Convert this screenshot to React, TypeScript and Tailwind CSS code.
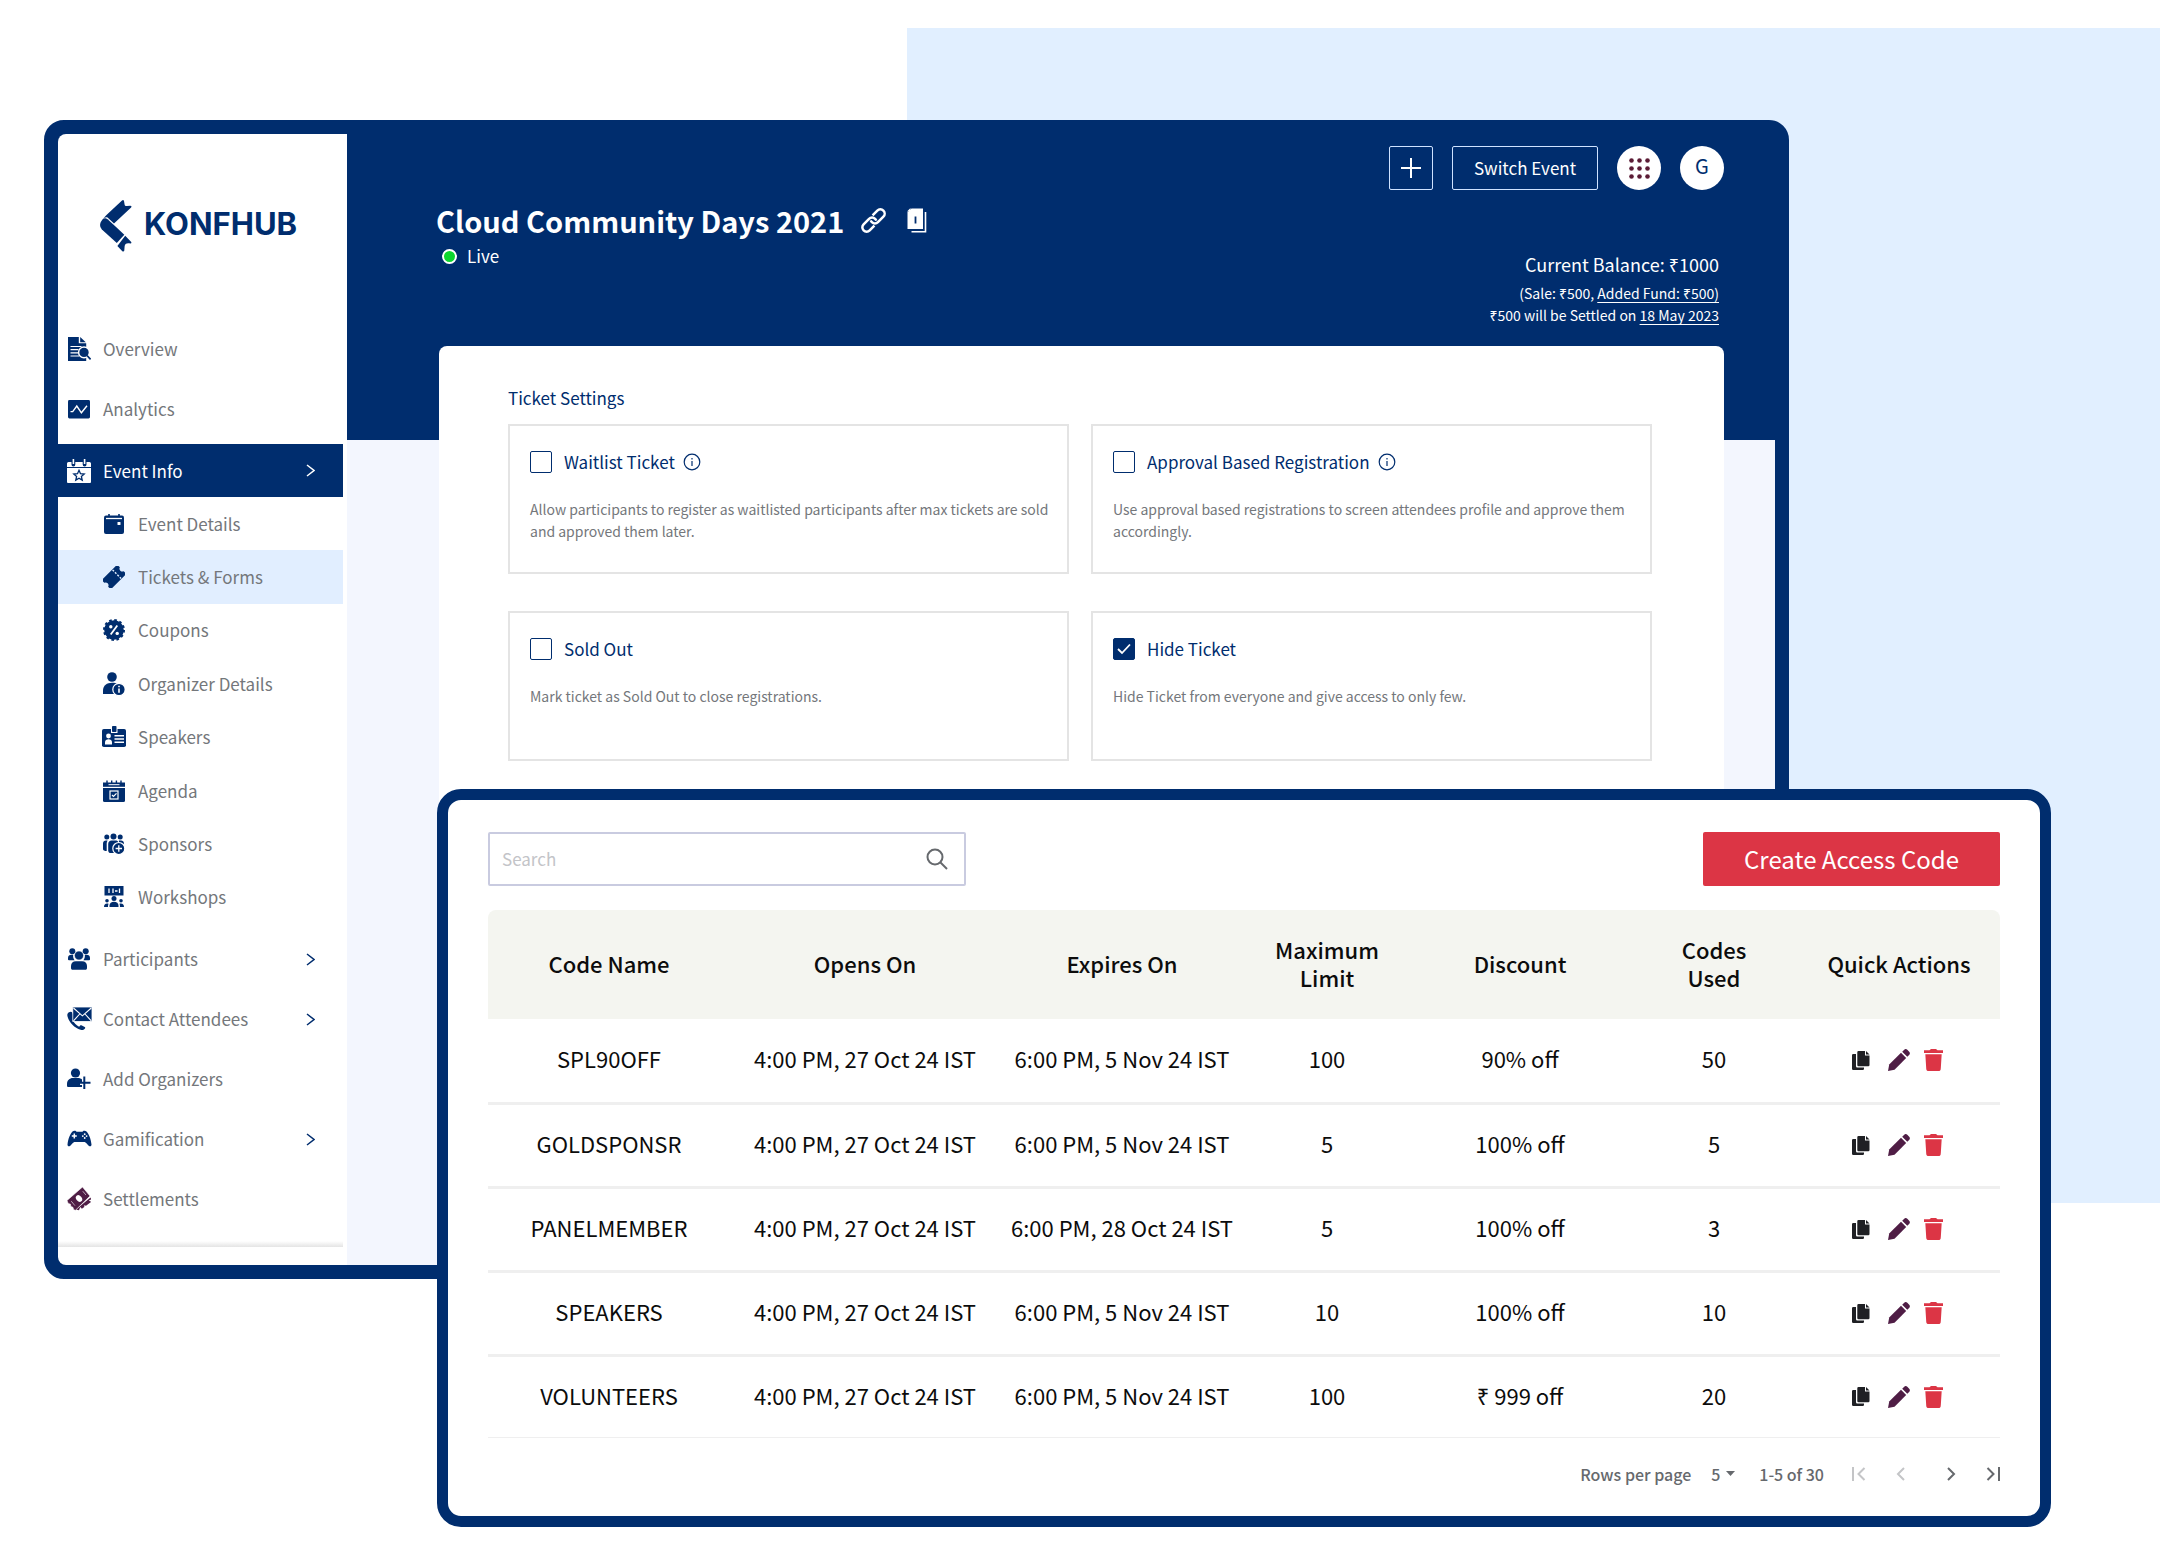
import { useId, useState, type ReactNode } from "react";

const NAVY = "#002d6e";
const PLUM = "#4f1d45";

function Svg({ w = 24, h = 24, children }: { w?: number; h?: number; children: ReactNode }) {
  return (
    <svg width={w} height={h} viewBox={`0 0 ${w} ${h}`} fill="none" aria-hidden="true" className="shrink-0">
      {children}
    </svg>
  );
}

const OverviewIcon = () => (
  <Svg>
    <path d="M1 0h10.800v6.200h7.400V24H1z" fill={NAVY} />
    <path d="M13.200 0l5.600 5.200h-5.600z" fill={NAVY} />
    <path d="M3.500 9.500h11M3.500 12.700h8M3.500 15.900h8M3.500 19h8.500" stroke="#fff" strokeWidth="1.200" />
    <circle cx="17" cy="15.400" r="5.400" fill={NAVY} stroke="#fff" strokeWidth="1.400" />
    <path d="M20 18.500l3.600 3.800" stroke={NAVY} strokeWidth="1.800" />
  </Svg>
);

const AnalyticsIcon = () => (
  <Svg w={22} h={20}>
    <rect y="1" width="22" height="18.400" rx="1.400" fill={NAVY} />
    <path d="M2.500 12.600h2.200L8.800 7l4.600 6.800 5.600-7" stroke="#fff" strokeWidth="1.400" />
  </Svg>
);

const EventInfoIcon = () => (
  <Svg>
    <path d="M1.500 3h3v2.500a1.900 1.900 0 0 0 3.800 0V3h7.400v2.500a1.900 1.900 0 0 0 3.800 0V3h3A1.500 1.500 0 0 1 24 4.500V8H0V4.500A1.500 1.500 0 0 1 1.500 3z" fill="#fff" />
    <path d="M6.400 0v5M17.600 0v5" stroke="#fff" strokeWidth="1.600" />
    <path d="M0 9h24v14a1 1 0 0 1-1 1H1a1 1 0 0 1-1-1z" fill="#fff" />
    <path d="M12 11.300l1.500 3.400 3.700.4-2.800 2.400.8 3.600-3.200-1.900-3.200 1.900.8-3.600-2.800-2.400 3.700-.4z" stroke={NAVY} strokeWidth="1.300" />
  </Svg>
);

const EventDetailsIcon = () => (
  <Svg w={20} h={20}>
    <rect y="1.500" width="20" height="18.500" rx="2" fill={NAVY} />
    <path d="M5 0v3M15 0v3" stroke={NAVY} strokeWidth="1.600" />
    <path d="M2 4.500h16" stroke="#fff" strokeWidth="1.300" />
    <rect x="13.500" y="8" width="3" height="3" rx=".6" fill="#fff" />
  </Svg>
);

const TicketIcon = () => (
  <Svg w={22} h={22}>
    <g transform="rotate(-45 11 11)">
      <path d="M0 4.500h22v3.800a2.800 2.800 0 0 0 0 5.400v3.800H0v-3.800a2.800 2.800 0 0 0 0-5.400z" fill={NAVY} />
      <path d="M15 5v12" stroke="#e1eeff" strokeWidth="1.400" strokeDasharray="2 1.400" />
    </g>
  </Svg>
);

const CouponIcon = () => (
  <Svg w={22} h={22}>
    <circle cx="11" cy="11" r="9.800" fill={NAVY} />
    <circle cx="11" cy="11" r="10" stroke={NAVY} strokeWidth="2" strokeDasharray="2.620 2.616" />
    <path d="M14.300 6.500l-6.600 9" stroke="#fff" strokeWidth="1.800" />
    <circle cx="7.800" cy="7.800" r="1.700" fill="#fff" />
    <circle cx="14.200" cy="14.400" r="1.700" fill="#fff" />
  </Svg>
);

const OrganizerIcon = () => (
  <Svg w={22} h={24}>
    <circle cx="9" cy="5" r="4.800" fill={NAVY} />
    <path d="M0 22v-3.500C0 13.500 4 10.800 9 10.800s7.500 2 8.500 5V22z" fill={NAVY} />
    <circle cx="16" cy="17.500" r="6.200" fill={NAVY} stroke="#fff" strokeWidth="1.200" />
    <path d="M16 16.500v4.200M16 13.700v1.600" stroke="#fff" strokeWidth="1.600" />
  </Svg>
);

const SpeakersIcon = () => (
  <Svg w={24} h={22}>
    <rect y="3" width="24" height="18" rx="1.800" fill={NAVY} />
    <path d="M9 2.500h6.500V7H9z" fill="#fff" />
    <rect x="10" y="0" width="4.500" height="6" rx=".8" fill={NAVY} />
    <circle cx="6.500" cy="10" r="2.400" fill="#fff" />
    <path d="M3 18.500v-2c0-2 1.500-3.200 3.500-3.200s3.500 1.200 3.500 3.200v2z" fill="#fff" />
    <path d="M12.500 9.700H22M12.500 13H22M12.500 16.300H22" stroke="#fff" strokeWidth="1.500" />
  </Svg>
);

const AgendaIcon = () => (
  <Svg w={22} h={22}>
    <path d="M0 2.500h22v4.300H0z" fill={NAVY} />
    <path d="M4 .5v3M8.700.5v3M13.400.5v3M18 .5v3" stroke={NAVY} strokeWidth="1.400" />
    <path d="M5.500 4.700h11" stroke="#fff" strokeWidth="1" />
    <path d="M0 8h22v12.500a1.500 1.500 0 0 1-1.500 1.500h-19A1.500 1.500 0 0 1 0 20.500z" fill={NAVY} />
    <rect x="7" y="11" width="8" height="8" stroke="#fff" strokeWidth="1.200" />
    <path d="M9 15l1.500 1.500 3-3.200" stroke="#fff" strokeWidth="1.200" />
  </Svg>
);

const SponsorsIcon = () => (
  <Svg w={22} h={22}>
    <circle cx="3.800" cy="4" r="2.500" fill={NAVY} />
    <circle cx="10.500" cy="3.500" r="3" fill={NAVY} />
    <circle cx="17.200" cy="4" r="2.500" fill={NAVY} />
    <path d="M0 16V10.500C0 8.800 1.200 7.600 3 7.600h1.600c-.6 1-.9 1.900-.9 3V18C1.500 18 0 17.500 0 16z" fill={NAVY} />
    <path d="M5.200 11c0-2 1.400-3.400 3.400-3.400h3.800c1.600 0 2.600.7 3.100 1.700V20H8c-1.700 0-2.800-1-2.800-2.600z" fill={NAVY} />
    <path d="M16 7.600h2c1.700 0 3 1.200 3 3V13h-5z" fill={NAVY} />
    <circle cx="15.800" cy="15.500" r="6" fill={NAVY} stroke="#fff" strokeWidth="1.200" />
    <path d="M15.800 12.300v6.400M12.600 15.500H19" stroke="#fff" strokeWidth="1.300" />
  </Svg>
);

const WorkshopsIcon = () => (
  <Svg w={20} h={22}>
    <rect x=".5" y="0" width="19" height="9.500" fill={NAVY} />
    <path d="M5 2.500v4.500M9 2.500v4.500M15.500 2.500v4.500M11 5h2.500" stroke="#fff" strokeWidth="1.300" />
    <circle cx="10" cy="12.500" r="2.500" fill={NAVY} />
    <path d="M5.500 21v-1.500c0-2.400 1.800-3.800 4.500-3.800s4.500 1.400 4.500 3.800V21z" fill={NAVY} />
    <circle cx="3" cy="14.800" r="1.800" fill={NAVY} />
    <circle cx="17" cy="14.800" r="1.800" fill={NAVY} />
    <path d="M0 21c0-2.400 1-3.600 3.200-3.600.6 0 1 .1 1.300.3-.4.900-.5 2-.5 3.300zM20 21c0-2.400-1-3.600-3.200-3.600-.6 0-1 .1-1.300.3.400.9.500 2 .5 3.300z" fill={NAVY} />
  </Svg>
);

const ParticipantsIcon = () => (
  <Svg w={22} h={22}>
    <circle cx="4.300" cy="3.200" r="3" fill={NAVY} />
    <circle cx="17.700" cy="3.200" r="3" fill={NAVY} />
    <path d="M0 11.500V10c0-2 1.400-3.200 3.400-3.200h1.800c-.3 2 .2 4 1.400 5.500H1c-.6 0-1-.3-1-.8zM22 11.500V10c0-2-1.400-3.200-3.400-3.200h-1.800c.3 2-.2 4-1.400 5.500H21c.6 0 1-.3 1-.8z" fill={NAVY} />
    <circle cx="11" cy="7.500" r="4.600" fill={NAVY} stroke="#fff" strokeWidth=".7" />
    <path d="M3 20v-2c0-3 2-4.800 4.800-4.800h6.400c2.800 0 4.800 1.800 4.800 4.800v2c0 1.200-.6 1.800-1.800 1.800H4.800C3.600 21.800 3 21.200 3 20z" fill={NAVY} />
  </Svg>
);

const ContactIcon = () => (
  <Svg w={25} h={24}>
    <path d="M2 5.200C.3 6 0 7.800.6 9.800 2.300 15.700 7.500 21 13.600 22.800c2 .6 3.700 0 4.500-1.600.2-.5.100-1-.4-1.300l-3.300-1.600c-.6-.2-1-.1-1.400.4l-.9 1c-2.700-1.400-5-3.700-6.400-6.500l1-1c.4-.4.500-.9.300-1.400L5.300 5.500C4.500 4.300 3.200 4.600 2 5.200z" fill={NAVY} />
    <rect x="5.800" y="0" width="19.200" height="14.500" fill={NAVY} stroke="#fff" strokeWidth=".8" />
    <path d="M6.500 1l8.900 7.800L24.300 1M6.500 13.800l6.200-6.800M24.300 13.800L18 7" stroke="#fff" strokeWidth="1.100" />
  </Svg>
);

const AddOrganizerIcon = () => (
  <Svg w={24} h={22}>
    <circle cx="8.500" cy="5" r="4.600" fill={NAVY} />
    <path d="M0 17.500V16c0-3.500 2.500-6 6-6h5c1.500 0 3 .5 4 1.500V14h-2v3h2v2H1.500C.5 19 0 18.500 0 17.500z" fill={NAVY} />
    <path d="M17.300 8.500V21M11.500 14.800h12" stroke={NAVY} strokeWidth="2" />
  </Svg>
);

const GamepadIcon = () => (
  <Svg w={25} h={18}>
    <path d="M5.500 1.500c.8-.7 1.700-1 3-.7l1 .9h6l1-.9c1.300-.3 2.200 0 3 .7C21.800 3.700 24 9 24.500 14.500c.100 1.700-1.200 2.300-2.500 1.500-1.400-1.200-2.700-3.500-4.300-4H7.300c-1.600.5-2.900 2.800-4.300 4-1.300.8-2.600.2-2.500-1.500C1 9 3.200 3.700 5.500 1.500z" fill={NAVY} />
    <path d="M7.300 3.600v5M4.800 6.100h5" stroke="#fff" strokeWidth="1.500" />
    <circle cx="17.700" cy="4.200" r=".9" fill="#fff" />
    <circle cx="17.700" cy="8" r=".9" fill="#fff" />
    <circle cx="15.800" cy="6.100" r=".9" fill="#fff" />
    <circle cx="19.600" cy="6.100" r=".9" fill="#fff" />
  </Svg>
);

const SettlementsIcon = () => (
  <Svg w={24} h={24}>
    <path d="M9 22.500L23.500 10.500l.7 1.800-2.400 1.200 2.400 1.300-5.200 4-1.800-.5.100 1.800-2.400 1.600-1.700-1.600-1.200 3.200z" fill={PLUM} />
    <path d="M0 13.500L15.500 0l7.500 9L8.500 23.200l-1.800-.4-.8-2.600-2-.6-.4-2.400-2.300-.8z" fill={PLUM} stroke="#fff" strokeWidth=".6" />
    <ellipse cx="12" cy="11.500" rx="2.700" ry="3.700" transform="rotate(-40 12 11.500)" fill="#fff" />
    <path d="M4.500 14.500l3.500 4.200M16 4.500l3 3.600" stroke="#fff" strokeWidth="1" strokeDasharray="1.500 1" />
  </Svg>
);

const Chevron = ({ className }: { className: string }) => (
  <svg width="9" height="13" viewBox="0 0 9 13" fill="none" aria-hidden="true" className={className}>
    <path d="M1 1l7 5.500L1 12" stroke="currentColor" strokeWidth="1.500" />
  </svg>
);

type Item = { label: string; icon: ReactNode; arrow?: boolean };

const topItems: Item[] = [
  { label: "Overview", icon: <OverviewIcon /> },
  { label: "Analytics", icon: <AnalyticsIcon /> },
];

const subItems: Item[] = [
  { label: "Event Details", icon: <EventDetailsIcon /> },
  { label: "Tickets & Forms", icon: <TicketIcon /> },
  { label: "Coupons", icon: <CouponIcon /> },
  { label: "Organizer Details", icon: <OrganizerIcon /> },
  { label: "Speakers", icon: <SpeakersIcon /> },
  { label: "Agenda", icon: <AgendaIcon /> },
  { label: "Sponsors", icon: <SponsorsIcon /> },
  { label: "Workshops", icon: <WorkshopsIcon /> },
];

const bottomItems: Item[] = [
  { label: "Participants", icon: <ParticipantsIcon />, arrow: true },
  { label: "Contact Attendees", icon: <ContactIcon />, arrow: true },
  { label: "Add Organizers", icon: <AddOrganizerIcon /> },
  { label: "Gamification", icon: <GamepadIcon />, arrow: true },
  { label: "Settlements", icon: <SettlementsIcon /> },
];

function NavLink({ item }: { item: Item }) {
  return (
    <a href="#" className="flex h-15 items-center pr-8 pl-[9px]">
      <span className="flex w-6 justify-center">{item.icon}</span>
      <span className="ml-3 flex-1">{item.label}</span>
      {item.arrow && <Chevron className="text-[#002d6e]" />}
    </a>
  );
}

function Logo() {
  return (
    <div className="flex items-center gap-3 pl-[42px] text-[#002d6e]">
      <svg width="32" height="54" viewBox="0 0 32 54" aria-label="KonfHub" className="shrink-0">
        <path d="M22 1.500c.8-.9 1.700-.7 2 .4l.6 3.500c.2 1.200 1 1.800 2.200 1.700l3.500-.4c1.200 0 1.600.8.800 1.700L14 24.500 7.800 18.700c-1.800-.8-3.500-.2-4.800 1.800C4 18.500 5.200 17.200 7 15.500z" fill="currentColor" />
        <path d="M7.600 20.200l7.900 7.300 8.800 8.200-7.500 8.300L3 31.500C-.8 28-.8 24.500 2.500 20.500c1.500-1.700 3.300-1.800 5.100-.3z" fill="currentColor" />
        <path d="M25.200 36.700l5.800 6c.8 1 .5 1.800-.8 1.700-3.400-.8-5.500.3-5.600 3.200l-.3 3.800c-.2 1.200-1.300 1.400-2.200.5l-4.700-5z" fill="currentColor" />
      </svg>
      <span className="pb-1 font-[Inter] text-[31px] leading-8 font-bold">KONFHUB</span>
    </div>
  );
}

function Sidebar() {
  return (
    <aside className="flex w-[289px] shrink-0 flex-col rounded-l-lg bg-white text-[17px] leading-6 text-[#74777b]">
      <div className="pt-[65px] pb-[66px]">
        <Logo />
      </div>
      <nav aria-label="Event">
        {topItems.map((i) => (
          <NavLink key={i.label} item={i} />
        ))}
        <a href="#" className="mt-[5px] mr-1 flex h-[53px] items-center bg-[#002d6e] pr-7 pl-[9px] text-white">
          <span className="flex w-6 justify-center">
            <EventInfoIcon />
          </span>
          <span className="ml-3 flex-1">Event Info</span>
          <Chevron className="text-white" />
        </a>
        <div className="mr-1 grid h-[427px] auto-rows-fr">
          {subItems.map((i, n) => (
            <a key={i.label} href="#" className={n === 1 ? "flex items-center bg-[#e1eeff] pl-11" : "flex items-center pl-11"}>
              <span className="flex w-6 justify-center">{i.icon}</span>
              <span className="ml-3">{i.label}</span>
            </a>
          ))}
        </div>
        <div className="pt-[5px] pb-3">
          {bottomItems.map((i) => (
            <NavLink key={i.label} item={i} />
          ))}
        </div>
      </nav>
      <div className="mt-auto mr-1 mb-[18px] h-1.5 bg-linear-to-b from-white to-[#e4e4e4]" />
    </aside>
  );
}

function Header() {
  return (
    <header className="flex h-[306px] shrink-0 justify-between bg-[#002d6e] pr-[51px] pl-[89px] text-white">
      <div className="pt-[66px]">
        <div className="flex items-center">
          <h1 className="text-[29px] leading-10 font-bold">Cloud Community Days 2021</h1>
          <button type="button" aria-label="Copy link" className="ml-4">
            <svg width="27" height="27" viewBox="0 0 27 27" fill="none" stroke="currentColor" strokeWidth="2.500">
              <g transform="rotate(-45 13.500 13.500)">
                <path d="M10.500 17.800H3.800a4.300 4.300 0 0 1-4.300-4.300 4.300 4.300 0 0 1 4.300-4.300h7.700a4.300 4.300 0 0 1 4.300 4.300c0 .8-.2 1.500-.5 2.100" />
                <path d="M16.500 9.200h6.700a4.300 4.300 0 0 1 4.300 4.300 4.300 4.300 0 0 1-4.300 4.300h-7.700a4.300 4.300 0 0 1-4.300-4.300c0-.8.2-1.500.5-2.100" />
              </g>
            </svg>
          </button>
          <button type="button" aria-label="Duplicate event" className="ml-5">
            <svg width="20" height="25" viewBox="0 0 20 25" fill="none">
              <path d="M4.500.5H16V21H.5V4.500z" fill="#fff" />
              <path d="M0 3.500L3.500 0v3.500z" fill="#fff" />
              <path d="M4.500 23.800h14V4" stroke="#fff" strokeWidth="1.600" />
              <path d="M8.500 8.500v7" stroke={NAVY} strokeWidth="1.800" />
            </svg>
          </button>
        </div>
        <div className="mt-1 ml-1.5 flex items-center gap-2.5">
          <span className="size-[15px] rounded-full border-2 border-white bg-[#0cd62e]" />
          <span className="text-[17px] leading-6">Live</span>
        </div>
      </div>
      <div className="flex flex-col items-end pt-3">
        <div className="flex items-center gap-[19px]">
          <button type="button" aria-label="Add" className="flex size-11 items-center justify-center rounded-xs border border-[#cfe2ff]">
            <svg width="20" height="20" viewBox="0 0 20 20" stroke="#fff" strokeWidth="2" aria-hidden="true">
              <path d="M10 0v20M0 10h20" />
            </svg>
          </button>
          <button type="button" className="h-11 w-[146px] rounded-xs border border-[#cfe2ff] text-[17px] leading-6">
            Switch Event
          </button>
          <button type="button" aria-label="Apps" className="flex size-11 items-center justify-center rounded-full bg-white">
            <svg width="21" height="21" viewBox="0 0 21 21" fill="#5b1b35" aria-hidden="true">
              {[2.5, 10.5, 18.5].map((y) => [2.5, 10.5, 18.5].map((x) => <circle key={`${x}-${y}`} cx={x} cy={y} r="2.300" />))}
            </svg>
          </button>
          <button type="button" aria-label="Account" className="size-11 rounded-full bg-white pb-1 text-[20px] leading-6 text-[#002d6e]">
            G
          </button>
        </div>
        <div className="mt-[62px] pr-[5px] text-right">
          <p className="text-[18px] leading-6">Current Balance: ₹1000</p>
          <p className="mt-1.5 text-[14px] leading-[22px]">
            (Sale: ₹500,{" "}
            <a href="#" className="underline underline-offset-3">
              Added Fund: ₹500)
            </a>
          </p>
          <p className="text-[14px] leading-[22px]">
            ₹500 will be Settled on{" "}
            <a href="#" className="underline underline-offset-3">
              18 May 2023
            </a>
          </p>
        </div>
      </div>
    </header>
  );
}

function SettingCard({ title, text, info, initial = false }: { title: string; text: string; info?: boolean; initial?: boolean }) {
  const id = useId();
  const [on, setOn] = useState(initial);
  return (
    <div className="min-h-[150px] border-2 border-[#e4e4e4] pt-6 pr-3 pl-5">
      <div className="flex items-center">
        <span className="relative flex size-[22px]">
          <input
            id={id}
            type="checkbox"
            checked={on}
            onChange={(e) => setOn(e.target.checked)}
            className="size-[22px] appearance-none rounded-xs border border-[#002d6e] bg-white checked:bg-[#002d6e]"
          />
          {on && (
            <svg viewBox="0 0 22 22" fill="none" stroke="#fff" strokeWidth="1.800" aria-hidden="true" className="pointer-events-none absolute inset-0">
              <path d="M5 11l4 4 8-8.500" />
            </svg>
          )}
        </span>
        <label htmlFor={id} className="ml-3 text-[17px] leading-6 text-[#002d6e]">
          {title}
        </label>
        {info && (
          <svg width="18" height="18" viewBox="0 0 18 18" fill="none" stroke={NAVY} strokeWidth="1.200" role="img" aria-label="More information" className="ml-2">
            <circle cx="9" cy="9" r="7.800" />
            <path d="M9 8v5M9 5v1.500" />
          </svg>
        )}
      </div>
      <p className="mt-6 text-[14px] leading-[22px] text-[#74777b]">{text}</p>
    </div>
  );
}

const codes = [
  ["SPL90OFF", "6:00 PM, 5 Nov 24 IST", "100", "90% off", "50"],
  ["GOLDSPONSR", "6:00 PM, 5 Nov 24 IST", "5", "100% off", "5"],
  ["PANELMEMBER", "6:00 PM, 28 Oct 24 IST", "5", "100% off", "3"],
  ["SPEAKERS", "6:00 PM, 5 Nov 24 IST", "10", "100% off", "10"],
  ["VOLUNTEERS", "6:00 PM, 5 Nov 24 IST", "100", "₹ 999 off", "20"],
];

function RowActions({ name }: { name: string }) {
  return (
    <div className="flex items-center justify-center gap-3.5 pr-1">
      <button type="button" aria-label={`Copy ${name}`}>
        <svg width="18" height="19" viewBox="0 0 18 19" fill="#1f2024" aria-hidden="true">
          <path d="M6.500 0H13v4.500h4.500V14a1.200 1.200 0 0 1-1.200 1.200H6.500A1.200 1.200 0 0 1 5.300 14V1.200A1.200 1.200 0 0 1 6.500 0z" />
          <path d="M14 0l3.500 3.500H14z" />
          <path d="M0 4.200A1.200 1.200 0 0 1 1.200 3H4v12.200a1.300 1.300 0 0 0 1.300 1.300H12v1.300a1.200 1.200 0 0 1-1.200 1.200H1.200A1.200 1.200 0 0 1 0 17.800z" />
        </svg>
      </button>
      <button type="button" aria-label={`Edit ${name}`} className="ml-1">
        <svg width="22" height="22" viewBox="0 0 22 22" fill={PLUM} aria-hidden="true">
          <path d="M0 22l1.200-6.500L13 3.800l5.200 5.200L6.500 20.700z" />
          <path d="M14.200 2.700L16 .9c1-1 2.300-1.100 3.300-.1l1.900 1.900c1 1 .9 2.300-.1 3.300l-1.800 1.800z" />
        </svg>
      </button>
      <button type="button" aria-label={`Delete ${name}`}>
        <svg width="19" height="22" viewBox="0 0 19 22" fill="#dc3545" aria-hidden="true">
          <path d="M0 1.300h5.500L7 0h5l1.500 1.300H19V4H0z" />
          <path d="M1.300 5.300h16.400l-1 14.900c-.1 1.100-.9 1.800-2 1.800H4.300c-1.100 0-1.900-.7-2-1.800z" />
        </svg>
      </button>
    </div>
  );
}

function CodesTable() {
  return (
    <table className="mt-6 w-full table-fixed text-center text-[22px] leading-7 text-[#0c0c0c]">
      <colgroup>
        <col className="w-[242px]" />
        <col className="w-[270px]" />
        <col className="w-[244px]" />
        <col className="w-[166px]" />
        <col className="w-[220px]" />
        <col className="w-[168px]" />
        <col className="w-[202px]" />
      </colgroup>
      <thead>
        <tr className="h-[109px] bg-[#f4f5f0]">
          <th className="rounded-tl-lg pb-1 font-medium">Code Name</th>
          <th className="pb-1 font-medium">Opens On</th>
          <th className="pb-1 font-medium">Expires On</th>
          <th className="pb-1 font-medium">
            Maximum
            <br />
            Limit
          </th>
          <th className="pb-1 font-medium">Discount</th>
          <th className="pb-1 font-medium">
            Codes
            <br />
            Used
          </th>
          <th className="rounded-tr-lg pb-1 font-medium whitespace-nowrap">Quick Actions</th>
        </tr>
      </thead>
      <tbody>
        {codes.map(([name, expires, limit, discount, used]) => (
          <tr key={name} className="h-[84px] border-b-3 border-[#efefef] last:h-[82px] last:border-b">
            <td className="pb-1">{name}</td>
            <td className="pb-1 whitespace-nowrap">4:00 PM, 27 Oct 24 IST</td>
            <td className="pb-1 whitespace-nowrap">{expires}</td>
            <td className="pb-1">{limit}</td>
            <td className="pb-1">{discount}</td>
            <td className="pb-1">{used}</td>
            <td>
              <RowActions name={name} />
            </td>
          </tr>
        ))}
      </tbody>
    </table>
  );
}

function PageButton({ label, path, disabled }: { label: string; path: string; disabled?: boolean }) {
  return (
    <button type="button" aria-label={label} disabled={disabled} className="text-[#66696d] disabled:text-[#c4c5c7]">
      <svg width="14" height="16" viewBox="0 0 14 16" fill="none" stroke="currentColor" strokeWidth="2" aria-hidden="true">
        <path d={path} />
      </svg>
    </button>
  );
}

function AccessPanel() {
  return (
    <section aria-label="Access codes" className="relative -mt-[490px] mr-[109px] ml-[437px] rounded-3xl border-11 border-[#002d6e] bg-white px-10 pt-8 pb-[30px]">
      <div className="flex items-center justify-between">
        <label className="flex h-[54px] w-[478px] items-center rounded-xs border-2 border-[#c9cbe0] pr-4 pl-3">
          <input type="search" aria-label="Search" placeholder="Search" className="min-w-0 flex-1 text-[17px] leading-6 outline-none placeholder:text-[#c3c4c8]" />
          <svg width="22" height="22" viewBox="0 0 22 22" fill="none" stroke="#66696d" strokeWidth="2" aria-hidden="true">
            <circle cx="9" cy="9" r="7.500" />
            <path d="M14.500 14.500l6.500 6.500" />
          </svg>
        </label>
        <button type="button" className="h-[54px] w-[297px] rounded-xs bg-[#dc3545] text-[24px] leading-8 text-white">
          Create Access Code
        </button>
      </div>
      <CodesTable />
      <div className="mt-6 flex h-6 items-center justify-end text-[16px] leading-6 font-medium text-[#66696d]">
        <label htmlFor="rows">Rows per page</label>
        <span className="relative ml-5 flex items-center">
          <select id="rows" defaultValue="5" className="w-6 appearance-none bg-transparent">
            <option>5</option>
            <option>10</option>
            <option>25</option>
          </select>
          <svg width="9" height="5" viewBox="0 0 9 5" fill="currentColor" aria-hidden="true" className="pointer-events-none absolute right-0">
            <path d="M0 0h9L4.500 5z" />
          </svg>
        </span>
        <span className="ml-6">1-5 of 30</span>
        <div className="ml-7 flex items-center gap-9">
          <div className="flex gap-7">
            <PageButton label="First page" path="M1 1v14M12.500 2l-6 6 6 6" disabled />
            <PageButton label="Previous page" path="M10 2L4 8l6 6" disabled />
          </div>
          <div className="flex gap-7">
            <PageButton label="Next page" path="M4 2l6 6-6 6" />
            <PageButton label="Last page" path="M1.500 2l6 6-6 6M13 1v14" />
          </div>
        </div>
      </div>
    </section>
  );
}

export default function App() {
  return (
    <div className="relative min-h-screen overflow-hidden bg-white pt-[120px] pb-10 font-['Noto_Sans_CJK_JP','Noto_Sans',sans-serif]">
      <div className="absolute top-7 right-0 left-[42%] h-[1175px] bg-[#e1efff]" />
      <div className="relative mr-[371px] ml-11 flex rounded-[20px] border-14 border-[#002d6e] bg-[#002d6e]">
        <Sidebar />
        <div className="flex min-w-0 flex-1 flex-col bg-[#f3f6fe]">
          <Header />
          <main className="-mt-[94px] mr-[51px] ml-[92px] flex-1 rounded-t-lg bg-white px-[69px] pt-10 pr-[72px]">
            <h2 className="text-[17px] leading-6 text-[#002d6e]">Ticket Settings</h2>
            <div className="mt-3.5 grid grid-cols-2 gap-x-[22px] gap-y-[37px]">
              <SettingCard title="Waitlist Ticket" info text="Allow participants to register as waitlisted participants after max tickets are sold and approved them later." />
              <SettingCard title="Approval Based Registration" info text="Use approval based registrations to screen attendees profile and approve them accordingly." />
              <SettingCard title="Sold Out" text="Mark ticket as Sold Out to close registrations." />
              <SettingCard title="Hide Ticket" initial text="Hide Ticket from everyone and give access to only few." />
            </div>
          </main>
        </div>
      </div>
      <AccessPanel />
    </div>
  );
}
